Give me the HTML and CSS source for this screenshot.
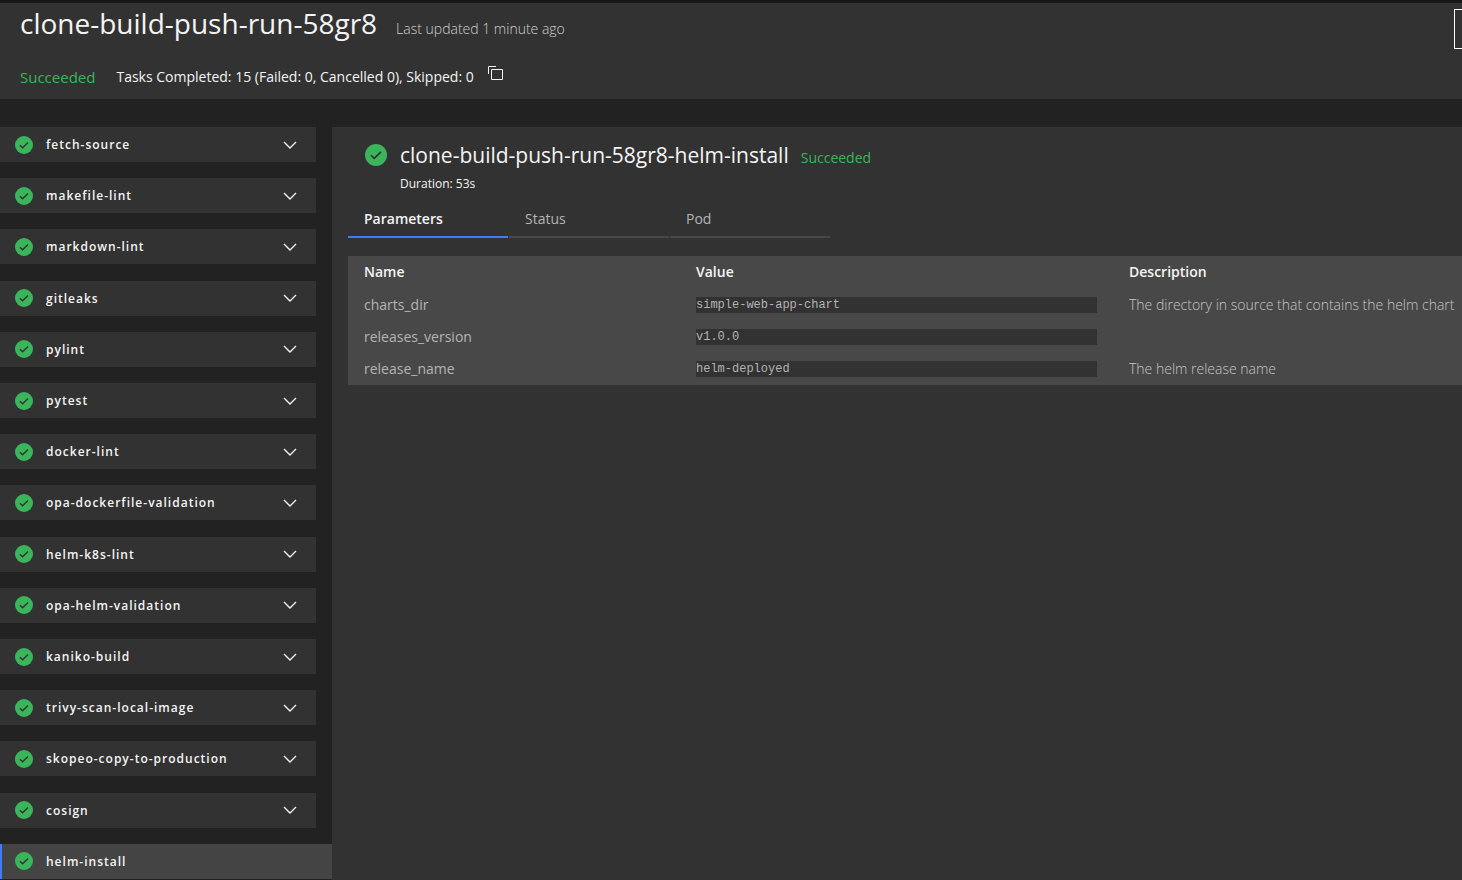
FILE: index.html
```html
<!DOCTYPE html>
<html lang="en">
<head>
<meta charset="utf-8">
<title>clone-build-push-run-58gr8</title>
<link rel="stylesheet" href="styles.css">
</head>
<body>
<svg class="sprite" aria-hidden="true">
  <symbol id="check" viewBox="0 0 18 18">
    <circle cx="9" cy="9" r="9" fill="#3bb55b"/>
    <path d="M4.9 9.2 7.6 11.8 13 6.4" fill="none" stroke="#323232" stroke-width="1.4"/>
  </symbol>
  <symbol id="chevron" viewBox="0 0 14 8">
    <path d="M1 1 7 7 13 1" fill="none" stroke="#f4f4f4" stroke-width="1.4"/>
  </symbol>
</svg>
<div class="page">
  <header class="run-header">
    <div class="run-heading">
      <h1 class="run-title">clone-build-push-run-58gr8</h1>
      <span class="run-updated">Last updated 1 minute ago</span>
      <button class="run-action" type="button" aria-label="Run actions"></button>
    </div>
    <div class="run-status">
      <span class="status">Succeeded</span>
      <span class="run-summary">Tasks Completed: 15 (Failed: 0, Cancelled 0), Skipped: 0</span>
      <button class="copy" type="button" aria-label="Copy status">
        <svg width="15" height="15" viewBox="0 0 15 15" fill="none" stroke="#f4f4f4"><path d="M.5 8V.5H8"/><path d="M3.5 3.5h11v10h-11z"/></svg>
      </button>
    </div>
  </header>
  <main class="run-body">
    <nav class="tasks" aria-label="Tasks">
      <button class="task" type="button"><svg class="check"><use href="#check"/></svg><span class="task-name">fetch-source</span><svg class="chevron"><use href="#chevron"/></svg></button>
      <button class="task" type="button"><svg class="check"><use href="#check"/></svg><span class="task-name">makefile-lint</span><svg class="chevron"><use href="#chevron"/></svg></button>
      <button class="task" type="button"><svg class="check"><use href="#check"/></svg><span class="task-name">markdown-lint</span><svg class="chevron"><use href="#chevron"/></svg></button>
      <button class="task" type="button"><svg class="check"><use href="#check"/></svg><span class="task-name">gitleaks</span><svg class="chevron"><use href="#chevron"/></svg></button>
      <button class="task" type="button"><svg class="check"><use href="#check"/></svg><span class="task-name">pylint</span><svg class="chevron"><use href="#chevron"/></svg></button>
      <button class="task" type="button"><svg class="check"><use href="#check"/></svg><span class="task-name">pytest</span><svg class="chevron"><use href="#chevron"/></svg></button>
      <button class="task" type="button"><svg class="check"><use href="#check"/></svg><span class="task-name">docker-lint</span><svg class="chevron"><use href="#chevron"/></svg></button>
      <button class="task" type="button"><svg class="check"><use href="#check"/></svg><span class="task-name">opa-dockerfile-validation</span><svg class="chevron"><use href="#chevron"/></svg></button>
      <button class="task" type="button"><svg class="check"><use href="#check"/></svg><span class="task-name">helm-k8s-lint</span><svg class="chevron"><use href="#chevron"/></svg></button>
      <button class="task" type="button"><svg class="check"><use href="#check"/></svg><span class="task-name">opa-helm-validation</span><svg class="chevron"><use href="#chevron"/></svg></button>
      <button class="task" type="button"><svg class="check"><use href="#check"/></svg><span class="task-name">kaniko-build</span><svg class="chevron"><use href="#chevron"/></svg></button>
      <button class="task" type="button"><svg class="check"><use href="#check"/></svg><span class="task-name">trivy-scan-local-image</span><svg class="chevron"><use href="#chevron"/></svg></button>
      <button class="task" type="button"><svg class="check"><use href="#check"/></svg><span class="task-name">skopeo-copy-to-production</span><svg class="chevron"><use href="#chevron"/></svg></button>
      <button class="task" type="button"><svg class="check"><use href="#check"/></svg><span class="task-name">cosign</span><svg class="chevron"><use href="#chevron"/></svg></button>
      <button class="task task-selected" type="button" aria-current="true"><svg class="check"><use href="#check"/></svg><span class="task-name">helm-install</span></button>
    </nav>
    <section class="details">
      <div class="details-header">
        <svg class="check check-large"><use href="#check"/></svg>
        <div class="details-heading">
          <h2 class="details-title">clone-build-push-run-58gr8-helm-install</h2>
          <span class="status status-small">Succeeded</span>
        </div>
        <p class="duration">Duration: 53s</p>
      </div>
      <div class="tabs" role="tablist">
        <button class="tab tab-selected" type="button" role="tab" aria-selected="true">Parameters</button>
        <button class="tab" type="button" role="tab" aria-selected="false">Status</button>
        <button class="tab" type="button" role="tab" aria-selected="false">Pod</button>
      </div>
      <table class="params">
        <thead>
          <tr><th class="col-name">Name</th><th class="col-value">Value</th><th>Description</th></tr>
        </thead>
        <tbody>
          <tr><td>charts_dir</td><td><code>simple-web-app-chart</code></td><td class="description">The directory in source that contains the helm chart</td></tr>
          <tr><td>releases_version</td><td><code>v1.0.0</code></td><td class="description"></td></tr>
          <tr><td>release_name</td><td><code>helm-deployed</code></td><td class="description">The helm release name</td></tr>
        </tbody>
      </table>
    </section>
  </main>
</div>
</body>
</html>
```
FILE: styles.css
```css
* { box-sizing: border-box; }

body {
  margin: 0;
  overflow: hidden;
  background: #222;
  color: #f4f4f4;
  font: 14px/20px "Open Sans", "Noto Sans", sans-serif;
}

button {
  margin: 0;
  padding: 0;
  border: 0;
  background: none;
  color: inherit;
  font: inherit;
  text-align: left;
}

h1, h2, p { margin: 0; }

.sprite { display: none; }

/* The run view is wider than the window, so its right edge is cut off. */
.page {
  display: flex;
  flex-direction: column;
  width: calc(100% + 40px);
  min-height: 100vh;
  border-top: 3px solid #181818;
}

.run-header {
  padding: 0 0 11px 20px;
  background: #323232;
}

.run-heading {
  display: flex;
  align-items: baseline;
  height: 63px;
}

.run-title {
  font-size: 28px;
  font-weight: 400;
  line-height: 40px;
}

.run-updated {
  margin-left: 19px;
  color: #d0d0d0;
  font-weight: 300;
}

.run-action {
  align-self: flex-start;
  width: 48px;
  height: 40px;
  margin: 6px 0 0 auto;
  border: 1px solid #fff;
}

.run-status {
  display: flex;
  align-items: center;
  height: 22px;
}

.status {
  color: #3bb55b;
  font-size: 15px;
}

.run-summary { margin-left: 21px; }

.copy {
  align-self: flex-start;
  margin-left: 14px;
}

.copy svg { display: block; }

.run-body {
  display: flex;
  flex: 1;
  padding-top: 28px;
}

.tasks {
  display: flex;
  flex-direction: column;
  justify-content: space-between;
  gap: 16px;
  width: 332px;
  padding-bottom: 1px;
}

.task {
  display: flex;
  align-items: center;
  height: 35px;
  margin-right: 16px;
  padding: 0 19px 0 15px;
  background: #323232;
  font-size: 12px;
  font-weight: 600;
  letter-spacing: 1px;
}

.task-selected {
  margin-right: 0;
  padding-left: 13px;
  border-left: 2px solid #3d7bff;
  background: #444;
}

.check {
  flex: none;
  width: 18px;
  height: 18px;
}

.task-name {
  flex: 1;
  margin-left: 13px;
  padding-top: 1px;
}

.chevron {
  width: 14px;
  height: 8px;
}

.details {
  flex: 1;
  min-width: 0;
  padding: 14px 0 0 16px;
  background: #323232;
}

.details-header {
  display: grid;
  grid-template-columns: 22px 1fr;
  column-gap: 13px;
  align-items: center;
  padding-left: 17px;
}

.check-large {
  width: 22px;
  height: 22px;
}

.details-heading {
  display: flex;
  align-items: baseline;
  gap: 12px;
}

.details-title {
  font-size: 21px;
  font-weight: 400;
  line-height: 28px;
}

.status-small { font-size: 14px; }

.duration {
  grid-column: 2;
  padding-top: 5px;
  font-size: 12px;
}

.tabs {
  display: flex;
  gap: 1px;
  margin-top: 4px;
}

.tab {
  width: 160px;
  height: 40px;
  padding: 4px 16px 0;
  border-bottom: 2px solid #484848;
  color: #b4b4b4;
}

.tab-selected {
  border-color: #3d7bff;
  color: #f4f4f4;
  font-weight: 600;
}

.params {
  width: 100%;
  margin-top: 18px;
  border-collapse: collapse;
  table-layout: fixed;
  background: #484848;
}

.params th,
.params td {
  height: 32px;
  padding: 0 16px;
  text-align: left;
  white-space: nowrap;
}

.params th {
  height: 33px;
  padding-bottom: 2px;
  font-weight: 600;
}

.params td { color: #b4b4b4; }

.params .description {
  color: #c6c6c6;
  font-weight: 300;
}

.col-name { width: 332px; }
.col-value { width: 433px; }

.params code {
  display: block;
  background: #323232;
  font: 12px/16px "Liberation Mono", monospace;
}
```
